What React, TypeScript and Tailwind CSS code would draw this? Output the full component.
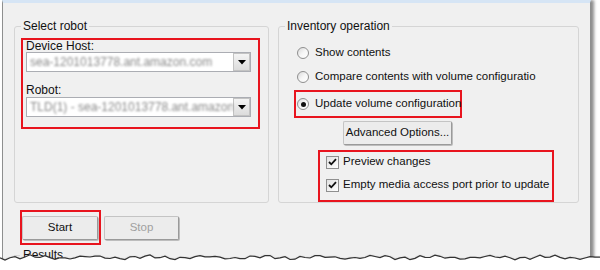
const font = { fontFamily: '"Liberation Sans", Arial, sans-serif' };

// jagged torn-paper edge points
const tornPts: [number, number][] = [];
for (let x = 0; x <= 600; x += 5) {
  const y = 7 + Math.sin(x * 0.37) * 1.2 + Math.sin(x * 0.11 + 1) * 1.1 + ((x * 7) % 3) * 0.4;
  tornPts.push([x, Number(y.toFixed(1))]);
}
const tornLine = tornPts.map(([x, y], i) => `${i ? "L" : "M"}${x},${y}`).join(" ");

function Combo({ text }: { text: string }) {
  return (
    <div className="flex h-[20px] w-[225px] border border-[#abadb3] bg-white">
      <div className="flex-1 overflow-hidden whitespace-nowrap pl-[3px] text-[12px] leading-[18px] text-[#8a8a8a] blur-[1.2px]">
        {text}
      </div>
      <div className="flex w-[17px] items-center justify-center border border-[#c3c3c3] bg-gradient-to-b from-[#f4f4f4] to-[#dcdcdc]">
        <svg width="8" height="5" viewBox="0 0 8 5">
          <path d="M0 0 H8 L4 4.5 Z" fill="#000" />
        </svg>
      </div>
    </div>
  );
}

function Radio({ checked }: { checked?: boolean }) {
  return (
    <div className="flex h-[12px] w-[12px] shrink-0 items-center justify-center rounded-full border border-[#8f8f8f] bg-gradient-to-br from-[#d9d9d9] via-[#f6f6f6] to-white">
      {checked && <div className="h-[5px] w-[5px] rounded-full bg-[#111]" />}
    </div>
  );
}

function Check() {
  return (
    <div className="flex h-[13px] w-[13px] shrink-0 items-center justify-center border border-[#8f8f8f] bg-gradient-to-br from-[#e2e2e2] to-white">
      <svg width="9" height="8" viewBox="0 0 9 8">
        <path d="M1 4 L3.3 6.3 L8 1.2" fill="none" stroke="#111" strokeWidth="1.8" />
      </svg>
    </div>
  );
}

function Button({ label, disabled, className }: { label: string; disabled?: boolean; className?: string }) {
  return (
    <div
      className={`flex h-[24px] items-center justify-center whitespace-nowrap rounded-[2px] border border-[#c4c4c4] border-r-[#9a9a9a] border-b-[#9a9a9a] bg-[#ececec] text-[11.5px] shadow-[1px_1px_0_#bdbdbd] ${
        disabled ? "text-[#a0a0a0]" : "text-[#111]"
      } ${className ?? ""}`}
    >
      {label}
    </div>
  );
}

export default function App() {
  return (
    <div className="relative h-[270px] w-[600px] overflow-hidden bg-white" style={font}>
      {/* WINDOW */}
      <div className="ml-[2px] h-[270px] w-[589px] border-x border-[#8e8f8f] border-t-[3px] border-t-[#d6e5f5] bg-[#f0f0f0] shadow-[3px_0_3px_rgba(0,0,0,0.45)]">
        <div className="whitespace-nowrap pl-[11px] pt-[16px] text-[#111]">
          {/* GROUP BOXES */}
          <div className="flex gap-[9px]">
            <fieldset className="h-[184px] w-[255px] rounded-[3px] border border-[#d5d5d5]">
              <legend className="ml-[6px] px-[2px] text-[12px] leading-[14px]">Select robot</legend>
              <div className="ml-[6px] mt-[5px] h-[91px] w-[239px] border-2 border-[#e8141e] pl-[3px]">
                <div className="h-[12px] text-[12px] leading-[12px]">Device Host:</div>
                <Combo text="sea-1201013778.ant.amazon.com" />
                <div className="mt-[12px] h-[13px] text-[12px] leading-[13px]">Robot:</div>
                <Combo text="TLD(1) - sea-1201013778.ant.amazon.ca" />
              </div>
            </fieldset>

            <fieldset className="h-[184px] w-[301px] rounded-[3px] border border-[#d5d5d5] text-[11.5px]">
              <legend className="ml-[6px] px-[2px] text-[12px] leading-[14px]">Inventory operation</legend>
              <div className="mt-[12px] flex h-[16px] items-center gap-[6px] pl-[18px]">
                <Radio />
                <span>Show contents</span>
              </div>
              <div className="mt-[8px] flex h-[16px] items-center gap-[6px] pl-[18px]">
                <Radio />
                <span>Compare contents with volume configuratio</span>
              </div>
              <div className="ml-[15px] mt-[5px] flex h-[28px] w-[168px] items-center gap-[6px] border-2 border-[#e8141e] pl-[1px]">
                <Radio checked />
                <span>Update volume configuration</span>
              </div>
              <Button label="Advanced Options..." className="ml-[64px] mt-[3px] w-[109px]" />
              <div className="ml-[39px] mt-[5px] flex h-[52px] w-[236px] flex-col gap-[9px] border-2 border-[#e8141e] pl-[6px] pt-[3px]">
                <div className="flex h-[14px] items-center gap-[4px]">
                  <Check />
                  <span>Preview changes</span>
                </div>
                <div className="flex h-[14px] items-center gap-[4px]">
                  <Check />
                  <span>Empty media access port prior to update</span>
                </div>
              </div>
            </fieldset>
          </div>

          {/* START / STOP */}
          <div className="ml-[6px] mt-[7px] flex items-start">
            <div className="h-[35px] w-[81px] border-2 border-[#e8141e] pt-[4px]">
              <Button label="Start" className="w-[76px]" />
            </div>
            <Button label="Stop" disabled className="ml-[3px] mt-[6px] w-[75px]" />
          </div>

          {/* RESULTS */}
          <div className="mt-[3px] flex items-center">
            <div className="h-px w-[6px] bg-[#d5d5d5]" />
            <span className="px-[3px] text-[12px] leading-[14px]">Results</span>
          </div>
        </div>
      </div>

      {/* TORN EDGE */}
      <svg className="absolute left-0 top-[250px]" width="600" height="20" viewBox="0 0 600 20">
        <defs>
          <filter id="tornShadow" x="-5%" y="-50%" width="110%" height="200%">
            <feGaussianBlur stdDeviation="1.3" />
          </filter>
        </defs>
        <path d={tornLine} transform="translate(0 2)" fill="none" stroke="#000" strokeOpacity="0.45" strokeWidth="3" filter="url(#tornShadow)" />
        <path d={`${tornLine} L600,20 L0,20 Z`} fill="#fff" />
        <path d={tornLine} fill="none" stroke="#333" strokeWidth="1.2" />
      </svg>
    </div>
  );
}
